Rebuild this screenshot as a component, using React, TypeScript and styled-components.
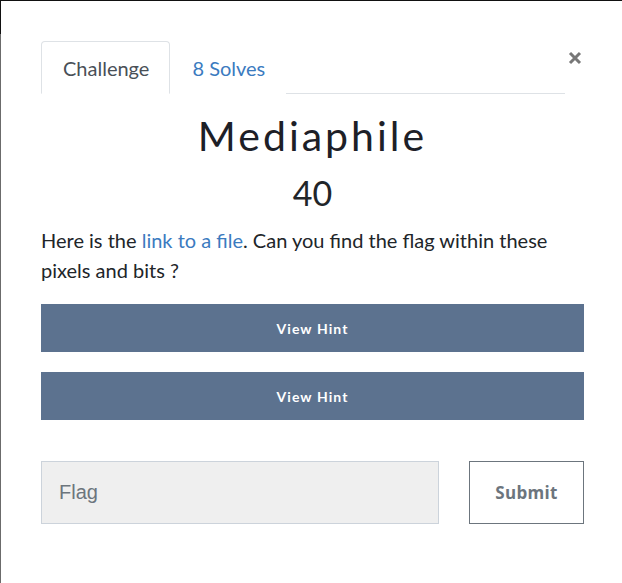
import React from "react";
import styled, { createGlobalStyle } from "styled-components";

const Global = createGlobalStyle`
  html, body { margin: 0; padding: 0; }
  body {
    background: linear-gradient(to bottom, #111 0 34px, #6b6b6b 34px);
    font-family: Lato, "Open Sans", sans-serif;
    overflow: hidden;
  }
`;

const Modal = styled.div`
  margin: 1px 0 0 1px;
  height: 582px;
  background: #fff;
  box-sizing: border-box;
  padding: 40px 38px 0 40px;
`;

const Header = styled.div`
  display: flex;
  align-items: flex-start;
`;

const Nav = styled.ul`
  list-style: none;
  margin: 0;
  padding: 0;
  display: flex;
  width: 526px;
  border-bottom: 1px solid #dee2e6;
`;

const Tab = styled.li<{ $active?: boolean }>`
  margin-bottom: -1px;
  padding: 0 20px 0 21px;
  height: 53px;
  display: flex;
  align-items: center;
  font-size: 20px;
  color: ${(p) => (p.$active ? "#495057" : "#3b7bbf")};
  background: #fff;
  border: 1px solid ${(p) => (p.$active ? "#dee2e6" : "transparent")};
  border-bottom-color: ${(p) => (p.$active ? "#fff" : "transparent")};
  border-radius: 4px 4px 0 0;
  box-sizing: border-box;
`;

const Close = styled.div`
  margin-left: 1px;
  margin-top: 6px;
  width: 18px;
  height: 22px;
  display: flex;
  align-items: center;
  justify-content: center;
`;

const Title = styled.h2`
  margin: 18px 0 0;
  text-align: center;
  font-weight: 400;
  font-size: 41px;
  letter-spacing: 3px;
  line-height: 48px;
  color: #1d2027;
`;

const Points = styled.h3`
  margin: 13px 0 0;
  text-align: center;
  font-weight: 400;
  font-size: 34px;
  line-height: 40px;
  color: #212529;
`;

const Desc = styled.p`
  margin: 12px 0 0;
  font-size: 20px;
  line-height: 30px;
  color: #212529;
  a { color: #3b7bbf; text-decoration: none; }
`;

const HintButton = styled.button<{ $top: number }>`
  display: block;
  width: 543px;
  height: 48px;
  border: none;
  background: #5c728f;
  color: #fff;
  font-family: Lato, sans-serif;
  font-size: 14px;
  font-weight: 700;
  letter-spacing: 1.1px;
  margin-top: ${(p) => p.$top}px;
  padding: 0;
`;

const SubmitRow = styled.div`
  display: flex;
  justify-content: space-between;
  margin-top: 41px;
  width: 543px;
`;

const FlagInput = styled.input`
  width: 398px;
  height: 63px;
  box-sizing: border-box;
  background: #efefef;
  border: 1px solid #ccd3db;
  padding: 0 17px;
  font-family: "Liberation Sans", Arial, sans-serif;
  font-size: 20px;
  color: #495057;
  outline: none;
  &::placeholder { color: #6c757d; }
`;

const Submit = styled.button`
  width: 115px;
  height: 63px;
  box-sizing: border-box;
  background: #fff;
  border: 1px solid #6c757d;
  color: #6c757d;
  font-family: "Open Sans", sans-serif;
  font-weight: 700;
  font-size: 17px;
  letter-spacing: 0.3px;
  padding: 0;
`;

export default function App() {
  return (
    <>
      <Global />
      <Modal>
        <Header>
          <Nav>
            <Tab $active>Challenge</Tab>
            <Tab>8 Solves</Tab>
          </Nav>
          <Close>
            <svg width="14" height="14" viewBox="0 0 14 14">
              <path d="M2 2 L12 12 M12 2 L2 12" stroke="#777" strokeWidth="3" />
            </svg>
          </Close>
        </Header>
        <Title>Mediaphile</Title>
        <Points>40</Points>
        <Desc>
          Here is the <a href="#">link to a file</a>. Can you find the flag within these pixels and bits ?
        </Desc>
        <HintButton $top={19}>View Hint</HintButton>
        <HintButton $top={20}>View Hint</HintButton>
        <SubmitRow>
          <FlagInput placeholder="Flag" />
          <Submit>Submit</Submit>
        </SubmitRow>
      </Modal>
    </>
  );
}
